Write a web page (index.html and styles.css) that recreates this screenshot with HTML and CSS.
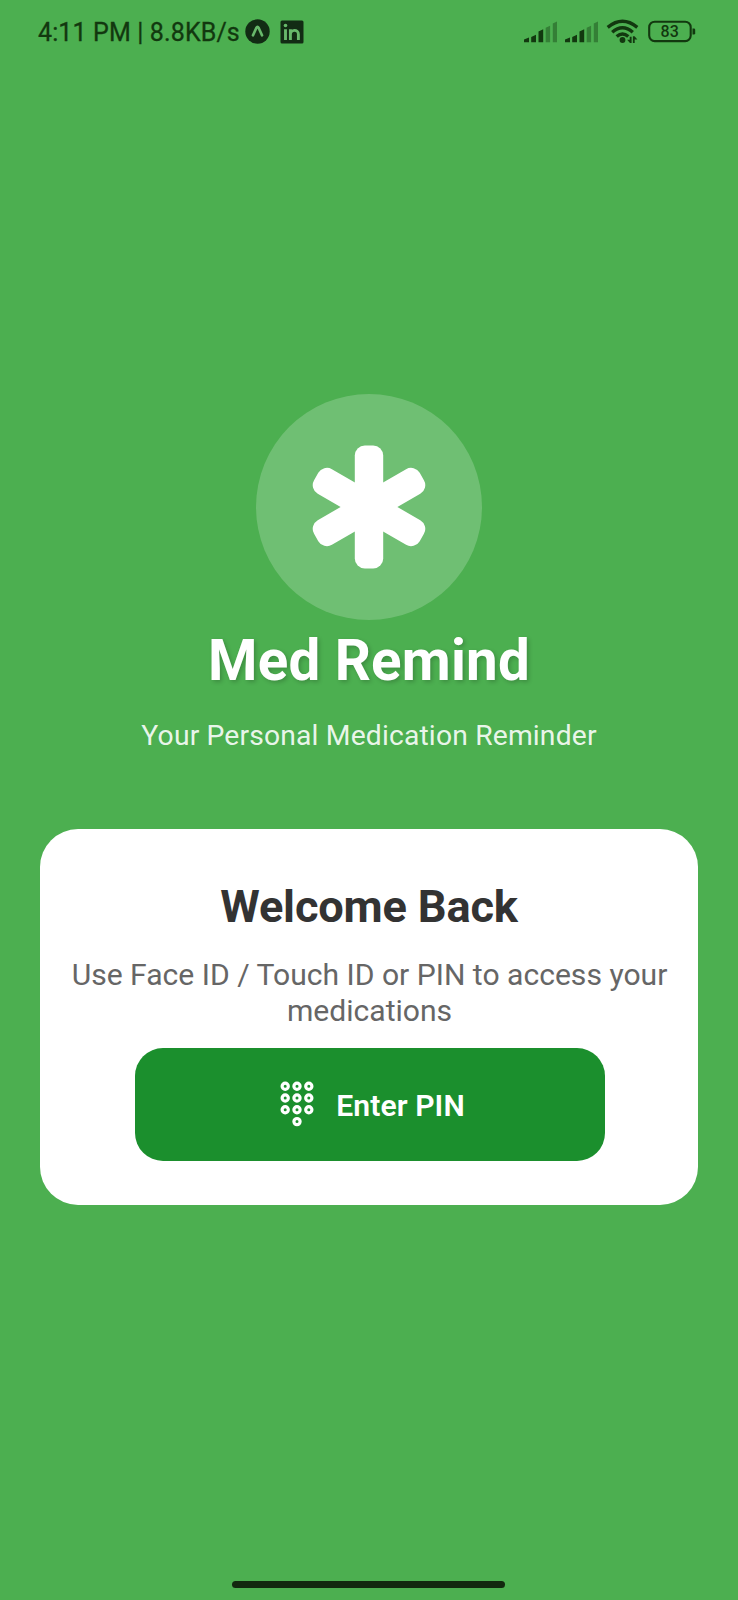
FILE: index.html
```html
<!DOCTYPE html>
<html lang="en">
<head>
<meta charset="utf-8">
<title>Med Remind</title>
<link rel="stylesheet" href="styles.css">
</head>
<body>
<div class="screen">
  <header class="status-bar">
    <div class="status-left">
      <span class="status-text">4:11 PM | 8.8KB/s</span>
      <svg class="expo-icon" width="25" height="25" viewBox="0 0 25 25">
        <circle cx="12.5" cy="12.5" r="12.2" fill="#122c14"/>
        <path d="M8 16.300 11.300 9Q12.500 6.800 13.700 9L17 16.300" fill="none" stroke="#68b96b" stroke-width="2.700" stroke-linecap="round"/>
      </svg>
      <svg class="linkedin-icon" width="24" height="24" viewBox="0 0 24 24">
        <rect x="0.5" y="0.5" width="23" height="23" rx="1.500" fill="#122c14"/>
        <g fill="none" stroke="#68b96b" stroke-width="2.900">
          <path d="M5.500 9.200V20M10.400 20V9.200M10.400 14.500C10.400 9.400 18.400 8.800 18.400 14.200V20"/>
        </g>
        <circle cx="5.500" cy="5.500" r="1.800" fill="#68b96b"/>
      </svg>
    </div>
    <svg class="status-icons" width="174" height="26" viewBox="0 0 174 26">
      <g fill="#12380f">
        <path d="M0 20.500 5 18.500v4.700H0zM7.200 18 12 15.800v7.400H7.200zM14.500 12.400l4.700-2.200v13h-4.700z"/>
        <path opacity=".4" d="M21.700 8.700l4.400-2v16.500h-4.400zM28.800 4.600l4.200-2v20.600h-4.200z"/>
        <path d="M41 20.500 46 18.500v4.700h-5zM48.200 18 53 15.800v7.400h-4.800zM55.500 12.400l4.700-2.200v13h-4.700z"/>
        <path opacity=".4" d="M62.700 8.700l4.400-2v16.500h-4.400zM69.800 4.600l4.200-2v20.600h-4.200z"/>
        <circle cx="98.500" cy="21" r="2.900"/>
        <path d="M107.600 17.800v6.200h-1.600l-2.900-3.200h2.600v-3zM108.900 24v-6.800h1.600l2.900 3.400h-2.700v3.400z"/>
      </g>
      <g fill="none" stroke="#12380f" stroke-width="3.400">
        <path d="M83.700 8.400Q98.500-3.700 113.300 8.400M88.200 13.200Q98.500 4.300 108.800 13.200M92.700 17.600Q98.500 12.300 104.300 17.600"/>
      </g>
      <rect x="125.200" y="2.700" width="41.500" height="19.400" rx="5.500" fill="none" stroke="#12380f" stroke-width="2.100"/>
      <path d="M168.500 9.500h1.400q1.300 0 1.300 1.300v3.400q0 1.300-1.300 1.300h-1.400z" fill="#12380f"/>
      <text class="battery-level" x="145.700" y="17.900" text-anchor="middle">83</text>
    </svg>
  </header>

  <main class="content">
    <div class="logo">
      <svg width="116" height="124" viewBox="-58 -62 116 124" fill="#fff">
        <rect x="-14.200" y="-61.500" width="28.400" height="123" rx="10"/>
        <rect x="-14.200" y="-61" width="28.400" height="122" rx="10" transform="rotate(60)"/>
        <rect x="-14.200" y="-61" width="28.400" height="122" rx="10" transform="rotate(-60)"/>
      </svg>
    </div>
    <h1 class="title">Med Remind</h1>
    <p class="subtitle">Your Personal Medication Reminder</p>

    <section class="card">
      <h2 class="card-title">Welcome Back</h2>
      <p class="card-text">Use Face ID / Touch ID or PIN to access your<br>medications</p>
      <button class="pin-button" type="button">
        <svg width="34" height="46" viewBox="0 0 34 46" fill="none" stroke="#fff" stroke-width="3.200">
          <circle cx="5.200" cy="5.200" r="3.100"/><circle cx="17" cy="5.200" r="3.100"/><circle cx="28.800" cy="5.200" r="3.100"/>
          <circle cx="5.200" cy="17" r="3.100"/><circle cx="17" cy="17" r="3.100"/><circle cx="28.800" cy="17" r="3.100"/>
          <circle cx="5.200" cy="28.800" r="3.100"/><circle cx="17" cy="28.800" r="3.100"/><circle cx="28.800" cy="28.800" r="3.100"/>
          <circle cx="17" cy="40.600" r="3.100"/>
        </svg>
        <span class="pin-label">Enter PIN</span>
      </button>
    </section>
  </main>

  <div class="home-indicator"></div>
</div>
</body>
</html>
```
FILE: styles.css
```css
* { box-sizing: border-box; margin: 0; padding: 0; }

body { font-family: Roboto, sans-serif; background: #4caf50; }

.screen {
  width: 738px;
  height: 1600px;
  display: flex;
  flex-direction: column;
  align-items: center;
  background: #4caf50;
}

.status-bar {
  width: 100%;
  height: 64px;
  padding: 0 40px 1px 38px;
  display: flex;
  align-items: center;
  justify-content: space-between;
}

.status-left { display: flex; align-items: center; }
.status-text { padding-top: 2px; font-size: 25px; line-height: 30px; letter-spacing: 0.13px; color: #12380f; -webkit-text-stroke: 0.3px #12380f; white-space: nowrap; width: 206.5px; }
.linkedin-icon { margin-left: 10px; }
.battery-level { font-family: Roboto, sans-serif; font-size: 16px; font-weight: 500; fill: #12380f; }

.content {
  width: 100%;
  flex: 1;
  padding: 330.3px 40px 0;
  display: flex;
  flex-direction: column;
  align-items: center;
}

.logo {
  width: 226px;
  height: 226px;
  border-radius: 50%;
  background: rgba(255, 255, 255, 0.2);
  display: flex;
  align-items: center;
  justify-content: center;
}

.title {
  margin-top: 7.7px;
  font-size: 56.5px;
  line-height: 66px;
  font-weight: 700;
  letter-spacing: 0.2px;
  color: #fff;
  white-space: nowrap;
  text-shadow: 2px 2px 4px rgba(0, 0, 0, 0.2);
}

.subtitle {
  margin-top: 25px;
  font-size: 28.3px;
  line-height: 33px;
  letter-spacing: 0.15px;
  color: rgba(255, 255, 255, 0.9);
  white-space: nowrap;
}

.card {
  width: 658px;
  height: 376px;
  margin-top: 77.3px;
  padding-top: 50.7px;
  border-radius: 38px;
  background: #fff;
  display: flex;
  flex-direction: column;
  align-items: center;
}

.card-title { font-size: 45.2px; line-height: 53px; font-weight: 700; letter-spacing: -0.18px; color: #333; white-space: nowrap; }

.card-text {
  margin-top: 24px;
  padding-left: 1px;
  font-size: 30.1px;
  line-height: 36px;
  color: #666;
  text-align: center;
  white-space: nowrap;
}

.pin-button {
  width: 470px;
  height: 113px;
  margin: 19px 0 0 1px;
  padding-left: 6px;
  border: 0;
  border-radius: 28px;
  background: #1b8f2d;
  display: flex;
  align-items: center;
  justify-content: center;
  gap: 22px;
  color: #fff;
}

.pin-label { padding-top: 3px; font-family: Roboto, sans-serif; font-size: 30.1px; line-height: 36px; font-weight: 600; letter-spacing: 0.1px; white-space: nowrap; }

.home-indicator { width: 273px; height: 7px; margin: 0 1px 12px 0; border-radius: 4px; background: #12280f; }
```
